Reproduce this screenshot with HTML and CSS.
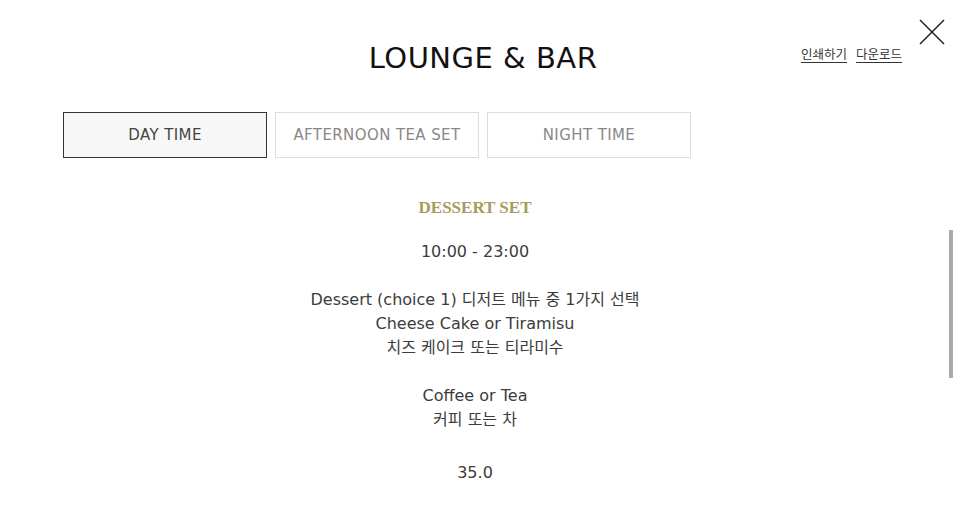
FILE: index.html
```html
<!DOCTYPE html>
<html lang="ko">
<head>
    <meta charset="UTF-8">
    <meta name="viewport" content="width=device-width, initial-scale=1.0">
    <title>Lounge &amp; Bar</title>
    <link rel="stylesheet" href="styles.css">
</head>
<body>

    <div class="popup">
        <div class="popup-head">
            <h1 class="title">LOUNGE &amp; BAR</h1>
            <div class="links">
                <a href="#">인쇄하기</a>
                <a href="#">다운로드</a>
            </div>
            <button class="close" aria-label="close">
                <svg width="26" height="26" viewBox="0 0 26 26">
                    <path d="M1 1 L25 25 M25 1 L1 25" stroke="#222" stroke-width="1.5" fill="none"/>
                </svg>
            </button>
        </div>

        <div class="popup-body">
            <div class="tabs">
                <div class="tab active">DAY TIME</div>
                <div class="tab">AFTERNOON TEA SET</div>
                <div class="tab">NIGHT TIME</div>
            </div>

            <div class="menu">
                <h2 class="menu-title">DESSERT SET</h2>
                <p>10:00 - 23:00</p>
                <p>Dessert (choice 1) 디저트 메뉴 중 1가지 선택<br>Cheese Cake or Tiramisu<br>치즈 케이크 또는 티라미수</p>
                <p>Coffee or Tea<br>커피 또는 차</p>
                <p class="price">35.0</p>
            </div>
        </div>

        <div class="scrollbar"><div class="thumb"></div></div>
    </div>

</body>
</html>
```

FILE: styles.css
```css
* {
    box-sizing: border-box;
}

body {
    margin: 0;
    background-color: #fff;
    font-family: "DejaVu Sans", "Noto Sans CJK KR", sans-serif;
    color: #3c3c3c;
}

.popup {
    position: relative;
    width: 966px;
    height: 523px;
    overflow: hidden;
}

.popup-head {
    position: relative;
    height: 112px;
    padding-top: 38px;
    text-align: center;
}

.title {
    margin: 0;
    font-size: 29px;
    font-weight: normal;
    letter-spacing: 0.5px;
    color: #111;
    line-height: 40px;
}

.links {
    position: absolute;
    top: 44px;
    right: 64px;
    display: flex;
    gap: 9px;
    font-family: "Noto Sans CJK KR", sans-serif;
    font-size: 12.5px;
}

.links a {
    color: #333;
    text-decoration: underline;
    text-underline-offset: 3px;
}

.close {
    position: absolute;
    top: 19px;
    right: 21px;
    padding: 0;
    border: 0;
    background: none;
    line-height: 0;
}

.popup-body {
    width: 950px;
    padding-left: 63px;
}

.tabs {
    display: flex;
    gap: 8px;
}

.tab {
    width: 204px;
    height: 46px;
    display: flex;
    align-items: center;
    justify-content: center;
    border: 1px solid #ddd;
    font-size: 15px;
    color: #888;
    letter-spacing: 0.4px;
}

.tab.active {
    border-color: #333;
    background-color: #f7f7f7;
    color: #444;
}

.menu {
    margin-left: -63px;
    padding-top: 38px;
    text-align: center;
    font-size: 16px;
    line-height: 24px;
}

.menu-title {
    margin: 0 0 20px;
    font-family: "Liberation Serif", serif;
    font-size: 17px;
    font-weight: bold;
    color: #a59b5c;
    line-height: 24px;
}

.menu p {
    margin: 0 0 24px;
}

.menu .price {
    margin-top: 29px;
}

.scrollbar {
    position: absolute;
    top: 230px;
    right: 13px;
    width: 4px;
    height: 148px;
}

.thumb {
    height: 100%;
    background-color: #aaa;
}
```
